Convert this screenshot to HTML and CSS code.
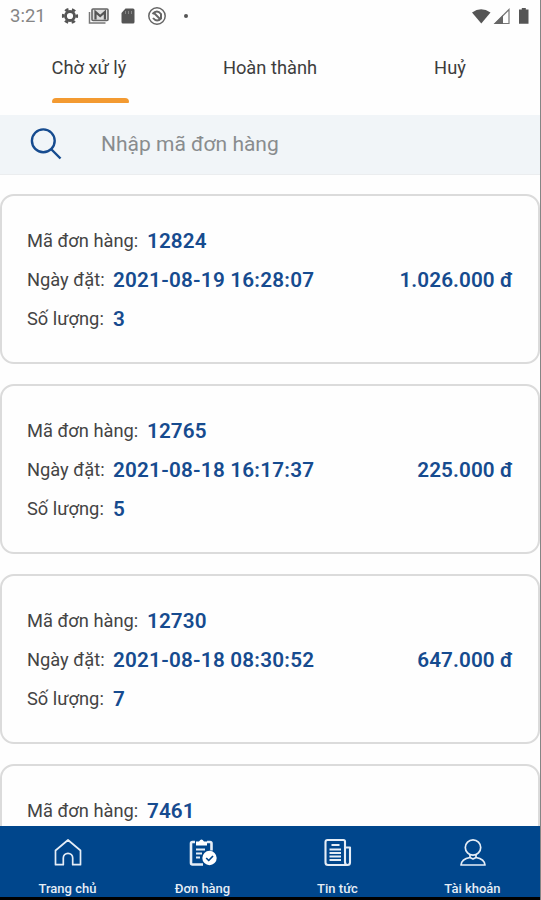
FILE: index.html
```html
<!DOCTYPE html>
<html lang="vi">
<head>
<meta charset="utf-8">
<title>Đơn hàng</title>
<link rel="stylesheet" href="styles.css">
</head>
<body>
<div class="app">
  <header class="status">
    <span class="clock">3:21</span>
    <svg class="sys" width="125" height="20" viewBox="0 0 125 20" fill="none">
      <g stroke="#555"><circle cx="10" cy="10" r="4.500" stroke-width="2.800"/><circle cx="10" cy="10" r="6.800" stroke-width="2.600" stroke-dasharray="3.600 3.520" stroke-dashoffset="1.800"/></g>
      <path d="M29.500 6v11h16" stroke="#777" stroke-width="1.500"/>
      <rect x="32" y="3" width="16" height="11.500" rx="1" fill="#ddd" stroke="#666" stroke-width="1.600"/>
      <path d="M35.500 13.500V6l4.700 4 4.700-4v7.500" stroke="#555" stroke-width="2.200"/>
      <path d="M65.500 2.500H73q1.500 0 1.500 1.500v12q0 1.500-1.500 1.500H63q-1.500 0-1.500-1.500V7z" fill="#555"/>
      <path d="M65.500 5v3M68.500 5v3M71.500 5v3" stroke="#888"/>
      <circle cx="97" cy="10" r="8.200" stroke="#666" stroke-width="1.500"/>
      <path d="M92.500 8q4.500-5 8.500 0v5M101.500 12q-4.500 5-8.500 0" stroke="#666" stroke-width="2"/>
      <path d="m94 7 6 6" stroke="#666" stroke-width="2"/>
    </svg>
    <span class="dot"></span>
    <svg class="signal" width="60" height="20" viewBox="0 0 60 20" fill="none">
      <path d="M2 6.500Q11 0 20.500 6.500L11.300 17.500z" fill="#555"/>
      <path d="M25 17.500 39 3.500v14z" stroke="#777" stroke-width="1.200"/>
      <path d="M24 18 33 9v9z" fill="#666"/>
      <path d="M49 3.500h2.800V2h4v1.500h2.700v14.300H49z" fill="#555"/>
    </svg>
  </header>
  <nav class="tabs">
    <a class="tab active"><span>Chờ xử lý</span></a>
    <a class="tab"><span>Hoàn thành</span></a>
    <a class="tab"><span>Huỷ</span></a>
  </nav>
  <div class="search">
    <svg width="34" height="34" viewBox="0 0 34 34" fill="none" stroke="#164b8f" stroke-width="2.400"><circle cx="13.300" cy="13.800" r="11.400"/><path d="m21 22 9.500 9.500"/></svg>
    <span>Nhập mã đơn hàng</span>
  </div>
  <main class="list">
    <section class="card">
      <div class="rows"><p><span class="k k1">Mã đơn hàng:</span><b>12824</b></p><p><span class="k k2">Ngày đặt:</span><b class="date">2021-08-19 16:28:07</b></p><p><span class="k k2">Số lượng:</span><b>3</b></p></div>
      <b class="price">1.026.000 đ</b>
    </section>
    <section class="card">
      <div class="rows"><p><span class="k k1">Mã đơn hàng:</span><b>12765</b></p><p><span class="k k2">Ngày đặt:</span><b class="date">2021-08-18 16:17:37</b></p><p><span class="k k2">Số lượng:</span><b>5</b></p></div>
      <b class="price">225.000 đ</b>
    </section>
    <section class="card">
      <div class="rows"><p><span class="k k1">Mã đơn hàng:</span><b>12730</b></p><p><span class="k k2">Ngày đặt:</span><b class="date">2021-08-18 08:30:52</b></p><p><span class="k k2">Số lượng:</span><b>7</b></p></div>
      <b class="price">647.000 đ</b>
    </section>
    <section class="card">
      <div class="rows"><p><span class="k k1">Mã đơn hàng:</span><b>7461</b></p></div>
    </section>
  </main>
  <footer class="bottom">
    <a><svg viewBox="0 0 30 30"><path d="M2.500 12.500 15 2l12.500 10.500v14.200h-7.800V20a4.700 4.700 0 0 0-9.400 0v6.700H2.500z"/></svg><span>Trang chủ</span></a>
    <a><svg viewBox="0 0 30 30"><path d="M7 4H4.500Q3 4 3 5.500V25q0 1.500 1.500 1.500H15M19 4h3q1.500 0 1.500 1.500v7" stroke-width="2.600"/><path d="M8 7.500V3.500h3q2.500-4 5 0h3v4z" fill="#fff" stroke="none"/><path d="M8 11.500h9M8 15.500h6M8 19.500h4" stroke-width="1.800"/><circle cx="21.500" cy="20" r="7.200" fill="#fff" stroke="none"/><path d="m18.200 20 2.500 2.500 4.300-4.500" stroke="#00468c"/></svg><span>Đơn hàng</span></a>
    <a><svg class="news" viewBox="0 0 30 30"><path d="M22 24V3.500Q22 2 20.500 2h-16Q2.500 2 2.500 4v20.500q0 2.500 2.500 2.500h19.500q2.500 0 2.500-2.500V9.500h-5M22 24q0 3 2.500 3"/><path d="M8.500 7h8M6.500 11.500H18M6.500 15H18M6.500 18.500H18M6.500 22H18"/></svg><span>Tin tức</span></a>
    <a><svg viewBox="0 0 30 30"><circle cx="15" cy="9.500" r="7.700"/><path d="M12 17v2.500Q3.500 21 3 27h24q-.5-6-9-7.500V17"/><path d="m12 19.500 3 1.500 3-1.500"/></svg><span>Tài khoản</span></a>
  </footer>
</div>
</body>
</html>
```
FILE: styles.css
```css
* { box-sizing: border-box; }
body { margin: 0; background: #fff; font-family: Roboto, "Liberation Sans", sans-serif; }
.app { height: 900px; display: flex; flex-direction: column; overflow: hidden; background: #fefefe; border-right: 1px solid #858585; }
.status { height: 32px; flex: none; display: flex; align-items: center; padding: 0 10px 1px; }
.clock { width: 50px; color: #858585; font-size: 18.5px; line-height: 24px; }
.sys { flex: none; }
.dot { width: 4px; height: 4px; margin-left: -1px; border-radius: 50%; background: #555; }
.signal { margin-left: auto; }
.tabs { height: 83px; flex: none; display: grid; grid-template-columns: repeat(3, 1fr); }
.tab { display: flex; justify-content: center; align-items: flex-start; color: #3d3d3d; font-size: 18.3px; line-height: 24px; white-space: nowrap; }
.tab span { height: 71px; padding-top: 24px; }
.active span { display: flex; flex-direction: column; justify-content: space-between; }
.active span::after { content: ""; height: 5px; width: 77px; border-radius: 4px 4px 1px 1px; background: #f39a31; }
.search { height: 60px; flex: none; display: flex; align-items: center; padding: 0 30px 2px; background: #f1f5f8; border-bottom: 1px solid #ebedef; color: #898c8e; font-size: 21px; }
.search svg { flex: none; margin-right: 37px; }
.list { flex: 1; min-height: 0; overflow: hidden; padding-top: 19px; }
.card { height: 170px; margin-bottom: 20px; padding: 25px 25px 0; border: 2px solid #dbdbdb; border-radius: 14px; display: flex; justify-content: space-between; align-items: flex-start; }
.rows p { height: 39px; margin: 0; display: flex; align-items: center; }
.k { color: #444; font-size: 18.3px; white-space: nowrap; }
.k1 { width: 120px; }
.k2 { width: 86px; }
.card b { color: #164b8f; font-size: 20.7px; font-weight: 600; white-space: nowrap; letter-spacing: .1px; }
.card .date { letter-spacing: .22px; }
.card .price { line-height: 39px; margin-top: 40px; letter-spacing: .1px; }
.bottom { height: 74px; flex: none; display: grid; grid-template-columns: repeat(4, 1fr); background: #00468c; border-bottom: 3px solid #000; }
.bottom a { display: flex; flex-direction: column; align-items: center; padding-top: 12px; color: #e5edf6; font-size: 13px; font-weight: 500; line-height: 16px; }
.bottom svg { width: 30px; height: 30px; margin-bottom: 13px; fill: none; stroke: #e5edf6; stroke-width: 1.7; stroke-linejoin: round; }
.bottom .news { stroke-width: 2.1; }
```
